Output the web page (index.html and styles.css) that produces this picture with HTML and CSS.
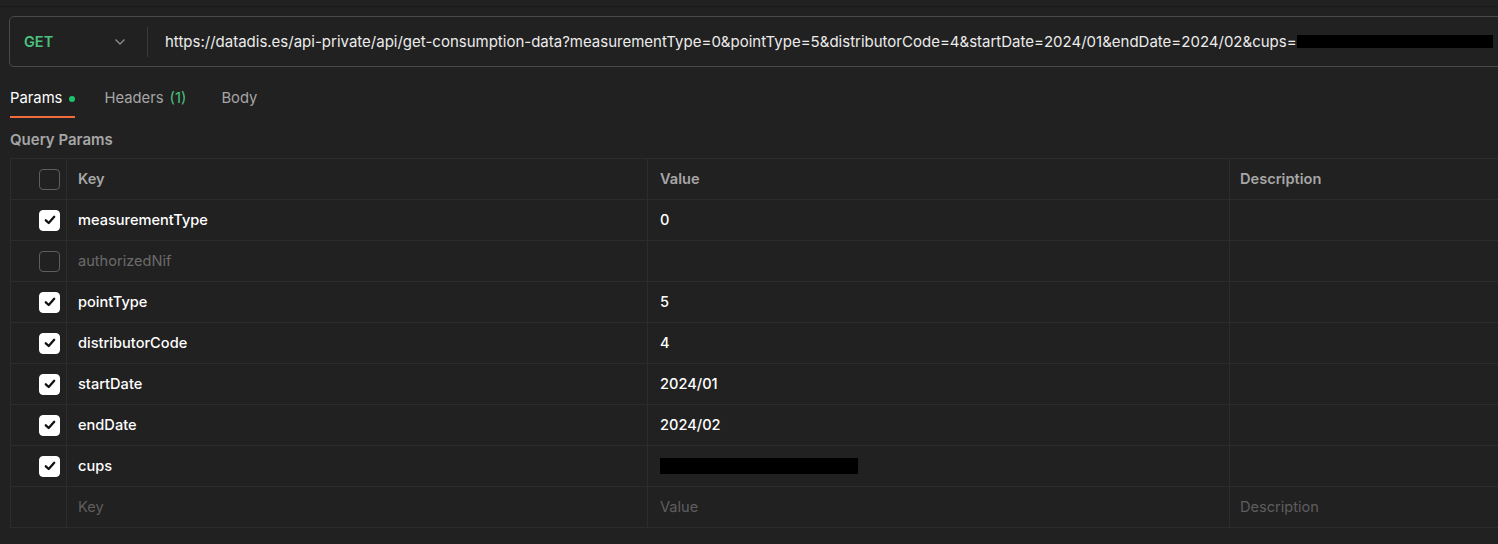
FILE: index.html
```html
<!DOCTYPE html>
<html>
<head>
<meta charset="utf-8">
<link rel="stylesheet" href="styles.css">
</head>
<body>
<div class="topline"></div>
<div class="urlbar">
  <div class="method">
    <span class="get">GET</span>
    <svg class="chev" width="12" height="8" viewBox="0 0 12 8"><path d="M1.5 1.5 L6 6 L10.5 1.5" fill="none" stroke="#8c8c8c" stroke-width="1.3"/></svg>
  </div>
  <div class="divider"></div>
  <div class="url">https://datadis.es/api-private/api/get-consumption-data?measurementType=0&amp;pointType=5&amp;distributorCode=4&amp;startDate=2024/01&amp;endDate=2024/02&amp;cups=<span class="redact"></span></div>
</div>
<div class="tabs">
  <div class="tab active">Params <span class="dot"></span></div>
  <div class="tab">Headers <span class="count">(1)</span></div>
  <div class="tab">Body</div>
</div>
<div class="section">Query Params</div>
<div class="table">
  <div class="row head">
    <div class="cb"><span class="box"></span></div>
    <div class="c key">Key</div>
    <div class="c val">Value</div>
    <div class="c desc">Description</div>
  </div>
  <div class="row">
    <div class="cb"><span class="box on"><svg width="14" height="14" viewBox="0 0 14 14"><path d="M2.8 7.3 L5.7 10 L11.2 3.8" fill="none" stroke="#111" stroke-width="2.3" stroke-linecap="round" stroke-linejoin="round"/></svg></span></div>
    <div class="c key">measurementType</div>
    <div class="c val">0</div>
    <div class="c desc"></div>
  </div>
  <div class="row off">
    <div class="cb"><span class="box"></span></div>
    <div class="c key">authorizedNif</div>
    <div class="c val"></div>
    <div class="c desc"></div>
  </div>
  <div class="row">
    <div class="cb"><span class="box on"><svg width="14" height="14" viewBox="0 0 14 14"><path d="M2.8 7.3 L5.7 10 L11.2 3.8" fill="none" stroke="#111" stroke-width="2.3" stroke-linecap="round" stroke-linejoin="round"/></svg></span></div>
    <div class="c key">pointType</div>
    <div class="c val">5</div>
    <div class="c desc"></div>
  </div>
  <div class="row">
    <div class="cb"><span class="box on"><svg width="14" height="14" viewBox="0 0 14 14"><path d="M2.8 7.3 L5.7 10 L11.2 3.8" fill="none" stroke="#111" stroke-width="2.3" stroke-linecap="round" stroke-linejoin="round"/></svg></span></div>
    <div class="c key">distributorCode</div>
    <div class="c val">4</div>
    <div class="c desc"></div>
  </div>
  <div class="row">
    <div class="cb"><span class="box on"><svg width="14" height="14" viewBox="0 0 14 14"><path d="M2.8 7.3 L5.7 10 L11.2 3.8" fill="none" stroke="#111" stroke-width="2.3" stroke-linecap="round" stroke-linejoin="round"/></svg></span></div>
    <div class="c key">startDate</div>
    <div class="c val">2024/01</div>
    <div class="c desc"></div>
  </div>
  <div class="row">
    <div class="cb"><span class="box on"><svg width="14" height="14" viewBox="0 0 14 14"><path d="M2.8 7.3 L5.7 10 L11.2 3.8" fill="none" stroke="#111" stroke-width="2.3" stroke-linecap="round" stroke-linejoin="round"/></svg></span></div>
    <div class="c key">endDate</div>
    <div class="c val">2024/02</div>
    <div class="c desc"></div>
  </div>
  <div class="row">
    <div class="cb"><span class="box on"><svg width="14" height="14" viewBox="0 0 14 14"><path d="M2.8 7.3 L5.7 10 L11.2 3.8" fill="none" stroke="#111" stroke-width="2.3" stroke-linecap="round" stroke-linejoin="round"/></svg></span></div>
    <div class="c key">cups</div>
    <div class="c val"><span class="redact2"></span></div>
    <div class="c desc"></div>
  </div>
  <div class="row ph">
    <div class="cb"></div>
    <div class="c key">Key</div>
    <div class="c val">Value</div>
    <div class="c desc">Description</div>
  </div>
</div>
</body>
</html>
```
FILE: styles.css
```css
html, body {
  margin: 0;
  padding: 0;
  background: #212121;
  width: 1498px;
  height: 544px;
  overflow: hidden;
  font-family: Inter, "Noto Sans", sans-serif;
  color: #ffffff;
}
.topline {
  height: 6px;
  border-bottom: 1px solid #1a1a1a;
}
.urlbar {
  margin: 9px 0 0 9px;
  width: 1520px;
  height: 49px;
  border: 1px solid #4a4a4a;
  border-radius: 5px;
  display: flex;
  align-items: center;
  box-sizing: content-box;
}
.method {
  width: 137px;
  display: flex;
  align-items: center;
  justify-content: space-between;
  padding-left: 14px;
  padding-right: 21px;
  box-sizing: border-box;
}
.get {
  color: #4cc27f;
  font-weight: 600;
  font-size: 14.5px;
}
.chev { display: block; }
.divider {
  width: 1px;
  height: 30px;
  background: #3a3a3a;
}
.url {
  padding-left: 17px;
  font-size: 15px;
  color: #ececec;
  white-space: nowrap;
  display: flex;
  align-items: center;
}
.redact {
  display: inline-block;
  width: 196px;
  height: 13px;
  background: #000;
}
.tabs {
  display: flex;
  margin: 20px 0 0 10px;
  height: 32px;
}
.tab {
  font-size: 14.8px;
  color: #a6a6a6;
  margin-right: 35px;
  height: 31px;
  display: flex;
  align-items: flex-start;
  padding-top: 2px;
  box-sizing: border-box;
}
.tab.active {
  color: #ffffff;
  border-bottom: 2px solid #f26b3a;
  margin-right: 29px;
}
.dot {
  display: inline-block;
  width: 6px;
  height: 6px;
  border-radius: 50%;
  background: #1dc36a;
  margin: 7px 0 0 7px;
}
.count {
  color: #4cc27f;
  margin-left: 6px;
}
.section {
  margin: 11px 0 0 10px;
  font-size: 15px;
  font-weight: 600;
  color: #a6a6a6;
  height: 28px;
}
.table {
  margin-left: 10px;
  width: 1530px;
  border: 1px solid #2c2c2c;
  border-right: none;
}
.row {
  display: flex;
  height: 41px;
  border-top: 1px solid #2c2c2c;
  box-sizing: border-box;
  align-items: stretch;
}
.row.head { border-top: none; height: 40px; }
.cb {
  width: 56px;
  border-right: 1px solid #2c2c2c;
  display: flex;
  align-items: center;
  justify-content: flex-end;
  padding-right: 6px;
  box-sizing: border-box;
}
.box {
  width: 21px;
  height: 21px;
  border: 1.5px solid #5e5e5e;
  border-radius: 4px;
  box-sizing: border-box;
  display: flex;
  align-items: center;
  justify-content: center;
}
.box.on {
  background: #ffffff;
  border-color: #ffffff;
}
.c {
  display: flex;
  align-items: center;
  font-size: 14.6px;
  font-weight: 500;
  padding-left: 11px;
  box-sizing: border-box;
}
.key { width: 581px; border-right: 1px solid #2c2c2c; }
.val { width: 582px; border-right: 1px solid #2c2c2c; padding-left: 12px; }
.desc { flex: 1; padding-left: 10px; }
.head .c { color: #a6a6a6; font-weight: 600; }
.off .key { color: #6b6b6b; font-weight: 400; }
.ph .c { color: #5e5e5e; font-weight: 400; }
.redact2 {
  display: inline-block;
  width: 198px;
  height: 16px;
  background: #000;
}
```
